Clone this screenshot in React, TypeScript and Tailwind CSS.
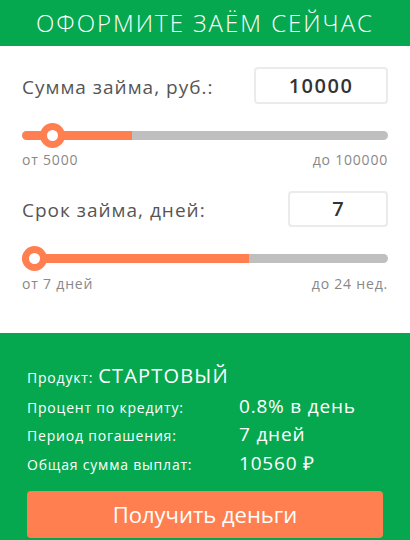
import React from "react";

const F = { fontFamily: "'Open Sans', 'Liberation Sans', sans-serif" };

function Slider({ pct, thumb }: { pct: number; thumb: number }) {
  return (
    <div className="relative flex h-[25px] items-center">
      <div className="relative h-[9px] w-full overflow-hidden rounded-full bg-[#bfbfbf]">
        <div className="h-full rounded-l-full bg-[#ff7f50]" style={{ width: `${pct}%` }} />
      </div>
      <div
        className="absolute top-0 h-[25px] w-[25px] rounded-full border-[7px] border-[#ff7f50] bg-white"
        style={{ left: thumb }}
      />
    </div>
  );
}

export default function App() {
  return (
    <div className="w-[410px] h-[540px] overflow-hidden bg-white" style={F}>
      <div className="flex h-[46px] items-center justify-center bg-[#06a84f] text-[24px] font-light tracking-[2px] text-white">
        ОФОРМИТЕ ЗАЁМ СЕЙЧАС
      </div>
      <div className="h-[287px] px-[22px] pt-[21px]">
        <div className="flex items-center justify-between">
          <span className="mt-[4px] text-[19px] tracking-[1px] text-[#555]">Сумма займа, руб.:</span>
          <div className="flex h-[37px] w-[134px] items-center justify-center rounded-[4px] border-2 border-[#ebebeb] text-[20px] font-semibold tracking-[1.5px] text-[#333]">
            10000
          </div>
        </div>
        <div className="mt-[19px]">
          <Slider pct={30} thumb={18} />
        </div>
        <div className="mt-[4px] flex justify-between text-[14px] leading-[16px] tracking-[0.8px] text-[#888]">
          <span>от 5000</span>
          <span>до 100000</span>
        </div>
        <div className="mt-[23px] flex items-center justify-between">
          <span className="mt-[2px] text-[19px] tracking-[1px] text-[#555]">Срок займа, дней:</span>
          <div className="flex h-[36px] w-[100px] items-center justify-center rounded-[4px] border-2 border-[#ebebeb] text-[20px] font-semibold text-[#333]">
            7
          </div>
        </div>
        <div className="mt-[19px]">
          <Slider pct={62} thumb={0} />
        </div>
        <div className="mt-[5px] flex justify-between text-[14px] leading-[16px] tracking-[0.8px] text-[#888]">
          <span>от 7 дней</span>
          <span>до 24 нед.</span>
        </div>
      </div>
      <div className="h-[207px] bg-[#06a84f] px-[27px] pt-[29px] text-white">
        <div className="flex items-baseline gap-[5px] leading-[28px]">
          <span className="text-[14px] tracking-[0.8px]">Продукт:</span>
          <span className="text-[20px] tracking-[1.2px]">СТАРТОВЫЙ</span>
        </div>
        <div className="mt-[1px] flex items-baseline leading-[27px]">
          <span className="w-[212px] text-[14px] tracking-[0.8px]">Процент по кредиту:</span>
          <span className="text-[19px] tracking-[0.8px]">0.8% в день</span>
        </div>
        <div className="flex items-baseline leading-[27px]">
          <span className="w-[212px] text-[14px] tracking-[0.8px]">Период погашения:</span>
          <span className="text-[19px] tracking-[0.8px]">7 дней</span>
        </div>
        <div className="flex items-baseline leading-[28px]">
          <span className="w-[212px] text-[14px] tracking-[0.8px]">Общая сумма выплат:</span>
          <span className="text-[19px] tracking-[0.8px]">10560 ₽</span>
        </div>
        <button className="mt-[12px] flex h-[47px] w-full items-center justify-center rounded-[4px] bg-[#ff7f50] text-[22px] text-white">
          Получить деньги
        </button>
      </div>
    </div>
  );
}
